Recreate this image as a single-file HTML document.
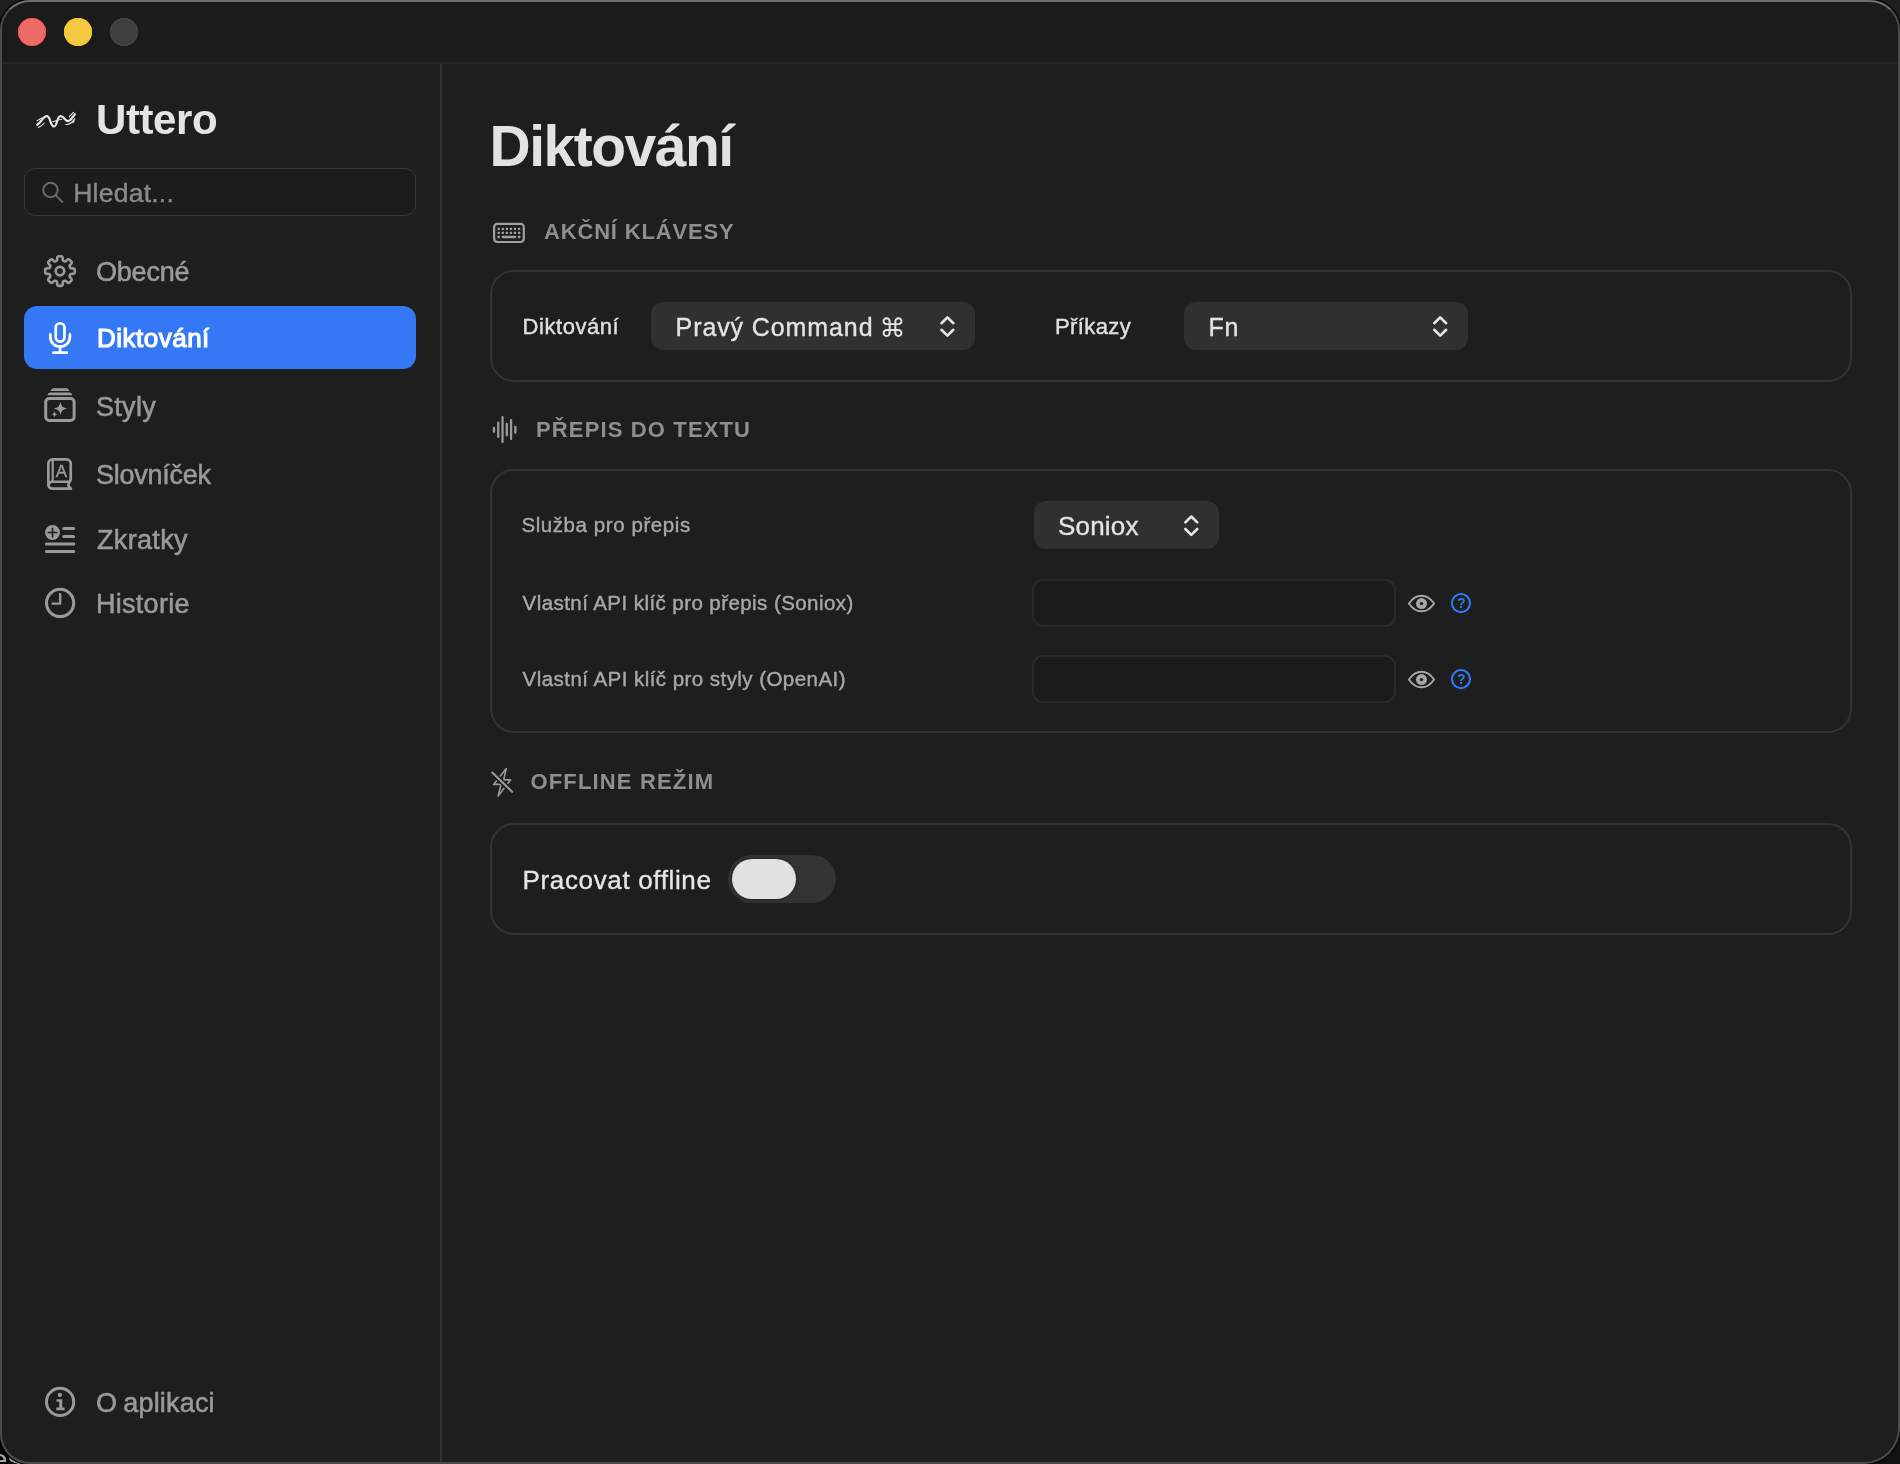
<!DOCTYPE html>
<html lang="cs">
<head>
<meta charset="utf-8">
<title>Uttero – Diktování</title>
<style>
*{box-sizing:border-box;margin:0;padding:0}
html,body{width:1900px;height:1464px;overflow:hidden;background:#1f1f1f}
body{font-family:"Liberation Sans",sans-serif;color:#e2e2e2;position:relative}
.abs{position:absolute}
.t{position:absolute;white-space:nowrap;line-height:1}
#win{will-change:transform;position:absolute;left:0;top:0;width:1900px;height:1464px;border-radius:30px 30px 36px 30px;background:#1e1e1e;overflow:hidden}
#titlebar{position:absolute;left:0;top:0;width:1900px;height:62px;background:#1b1b1b}
#titleline{position:absolute;left:0;top:62px;width:1900px;height:2px;background:#262626}
#sidebar{position:absolute;left:0;top:64px;width:440px;height:1400px;background:#1e1e1e}
#divider{position:absolute;left:440px;top:64px;width:2px;height:1400px;background:#303030}
#main{position:absolute;left:442px;top:64px;width:1458px;height:1400px;background:#1e1e1e}
#frame{position:absolute;left:0;top:0;width:1900px;height:1464px;border-radius:30px 30px 36px 30px;border:2px solid #4b4b4b;border-top-color:#6f6f6f;pointer-events:none;box-shadow:0 0 0 1.5px #050505}
.tl{position:absolute;top:18px;width:28px;height:28px;border-radius:50%}
.card{position:absolute;left:490px;width:1362px;border:2px solid #333;border-radius:24px;background:#1e1e1e}
.sel{position:absolute;height:48px;border-radius:12px;background:#303030}
.inp{position:absolute;left:1032px;width:364px;height:48px;border-radius:11px;background:#1b1b1b;border:2px solid #2a2a2a}
.nav{color:#9a9a9a;font-size:27px;-webkit-text-stroke:0.55px #9a9a9a}
.sec{color:#8f8f8f;font-size:22px;font-weight:bold}
.lbl{color:#a8a8a8;font-size:20.5px;-webkit-text-stroke:0.4px #a8a8a8}
svg{position:absolute;overflow:visible}
</style>
</head>
<body>
<div id="br" style="position:absolute;left:1860px;top:1424px;width:40px;height:40px;background:#121212"></div>
<div id="bl" style="position:absolute;left:0;top:1424px;width:40px;height:40px;background:#000;overflow:hidden;will-change:transform"><span class="t" style="left:-9px;top:21px;font-size:30px;color:#a4a4a4">es</span></div>
<div id="win">
  <div id="titlebar"></div>
  <div id="titleline"></div>
  <div id="sidebar"></div>
  <div id="main"></div>
  <div id="divider"></div>

  <!-- traffic lights -->
  <div class="tl" style="left:18px;background:#ee6a67;box-shadow:inset 0 0 0 1px #f04a44"></div>
  <div class="tl" style="left:64px;background:#f4c842;box-shadow:inset 0 0 0 1px #f9c426"></div>
  <div class="tl" style="left:110px;background:#3f3f3f;box-shadow:inset 0 0 0 1px #484848"></div>

  <!-- SIDEBAR -->
  <span class="t" id="brand" style="left:96.0px;top:99px;font-size:42px;font-weight:bold;color:#e4e4e4;letter-spacing:-0.40px">Uttero</span>
  <div class="abs" id="search" style="left:24px;top:168px;width:392px;height:48px;border-radius:11px;border:1px solid #3a3a3a;background:#1c1c1c"></div>
  <span class="t" id="searchph" style="left:73.2px;top:180px;font-size:26.5px;color:#8a8a8a;-webkit-text-stroke:0.4px #8a8a8a;letter-spacing:0.24px">Hledat...</span>

  <span class="t nav" id="n1" style="left:96.0px;top:259px;letter-spacing:-0.20px">Obecné</span>
  <div class="abs" id="selnav" style="left:24px;top:306px;width:392px;height:63px;border-radius:13px;background:#3478f6"></div>
  <span class="t nav" id="n2" style="left:97.0px;top:325px;font-size:26px;color:#fff;-webkit-text-stroke:1.15px #fff;letter-spacing:0.49px">Diktování</span>
  <span class="t nav" id="n3" style="left:96.0px;top:394px;letter-spacing:0.29px">Styly</span>
  <span class="t nav" id="n4" style="left:96.0px;top:462px;letter-spacing:-0.25px">Slovníček</span>
  <span class="t nav" id="n5" style="left:97.0px;top:527px;letter-spacing:0.33px">Zkratky</span>
  <span class="t nav" id="n6" style="left:96.0px;top:591px;letter-spacing:0.28px">Historie</span>
  <span class="t nav" id="n7" style="left:96.0px;top:1390px;letter-spacing:0.18px;word-spacing:-1.6px">O aplikaci</span>

  <!-- MAIN -->
  <span class="t" id="h1" style="left:489.6px;top:118px;font-size:57px;font-weight:bold;color:#e2e2e2;letter-spacing:-1.5px">Diktování</span>

  <span class="t sec" id="s1" style="left:544.0px;top:221px;letter-spacing:0.83px">AKČNÍ KLÁVESY</span>
  <div class="card" style="top:270px;height:112px"></div>
  <span class="t" id="l1" style="left:522.6px;top:316px;font-size:22px;color:#e0e0e0;-webkit-text-stroke:0.4px #e0e0e0;letter-spacing:0.55px">Diktování</span>
  <div class="sel" style="left:651px;top:302px;width:324px"></div>
  <span class="t" id="v1" style="left:675.6px;top:315px;font-size:25px;color:#e4e4e4;-webkit-text-stroke:0.35px #e4e4e4;letter-spacing:0.9px">Pravý Command</span>
  <span class="t" id="v1c" style="left:879.4px;top:315.4px;font-size:26px;color:#e4e4e4;font-family:'DejaVu Sans',sans-serif">⌘</span>
  <span class="t" id="l2" style="left:1055px;top:316px;font-size:22px;color:#e0e0e0;-webkit-text-stroke:0.4px #e0e0e0;letter-spacing:0.38px">Příkazy</span>
  <div class="sel" style="left:1184px;top:302px;width:284px"></div>
  <span class="t" id="v2" style="left:1208.6px;top:315px;font-size:25px;color:#e4e4e4;-webkit-text-stroke:0.35px #e4e4e4;letter-spacing:0.7px">Fn</span>

  <span class="t sec" id="s2" style="left:536.0px;top:419px;letter-spacing:1.14px">PŘEPIS DO TEXTU</span>
  <div class="card" style="top:469px;height:264px"></div>
  <span class="t lbl" id="l3" style="left:521.4px;top:515px;letter-spacing:0.58px">Služba pro přepis</span>
  <div class="sel" style="left:1034px;top:501px;width:185px"></div>
  <span class="t" id="v3" style="left:1058.0px;top:513px;font-size:26px;color:#e4e4e4;-webkit-text-stroke:0.35px #e4e4e4;letter-spacing:0.20px">Soniox</span>
  <span class="t lbl" id="l4" style="left:522.6px;top:593px;letter-spacing:0.43px">Vlastní API klíč pro přepis (Soniox)</span>
  <div class="inp" style="top:579px"></div>
  <span class="t lbl" id="l5" style="left:522.6px;top:669px;letter-spacing:0.45px">Vlastní API klíč pro styly (OpenAI)</span>
  <div class="inp" style="top:655px"></div>

  <span class="t sec" id="s3" style="left:530.4px;top:771px;letter-spacing:1.17px">OFFLINE REŽIM</span>
  <div class="card" style="top:823px;height:112px"></div>
  <span class="t" id="l6" style="left:522.6px;top:867px;font-size:26px;color:#e6e6e6;-webkit-text-stroke:0.35px #e6e6e6;letter-spacing:0.64px">Pracovat offline</span>
  <div class="abs" id="tog" style="left:728px;top:855px;width:108px;height:48px;border-radius:24px;background:#333"></div>
  <div class="abs" id="knob" style="left:732px;top:859px;width:64px;height:40px;border-radius:20px;background:#e1e1e1;box-shadow:0 0 4px rgba(0,0,0,.35)"></div>
  <!--ICONS--><svg id="icons" width="1900" height="1464" viewBox="0 0 1900 1464" style="left:0;top:0">
<g fill="none" stroke="#e6e6e6" stroke-linecap="round" stroke-linejoin="round">
<path stroke-width="2.2" d="M37.2,124.7 C41,123 43.0,116.2 46.75,116.2 C50.8,116.2 50.0,126.45 53.9,126.45 C57.6,126.45 56.6,116.2 60.6,116.2 C64.2,116.2 64.8,121.1 68,121.1 C71,121.1 72.6,116.6 74.9,114.2"/>
<path stroke-width="1.1" stroke-dasharray="1.6 0.9" d="M37.0,120.9 L41.6,118.0"/>
<path stroke-width="1.1" stroke-dasharray="2.2 0.8" d="M38.2,127.2 C40.2,126.8 42.4,125.2 44.1,123"/>
<path stroke-width="1.2" d="M52.9,121.8 C55,121.6 56.6,119.4 61.6,119.5"/>
<path stroke-width="1.2" d="M65.8,124.5 C69.4,124.8 72.4,122.2 74.7,118.8"/>
<path stroke-width="1.2" stroke-dasharray="1.6 0.9" d="M69.3,116.6 L73.4,112.4"/>
<path stroke-width="1.2" d="M72.9,122.6 L74.3,121.2"/>
</g>
<g fill="none" stroke="#6a6a6a" stroke-width="2" stroke-linecap="round"><circle cx="50.5" cy="190" r="7.2"/><path d="M55.8,195.4 L62.2,201.8"/></g>
<path d="M74.75,271.10 L74.75,271.36 L74.74,271.62 L74.73,271.87 L74.71,272.13 L74.68,272.39 L74.64,272.64 L74.58,272.90 L74.49,273.14 L74.33,273.38 L74.04,273.58 L73.55,273.74 L72.84,273.84 L72.03,273.89 L71.33,273.94 L70.85,274.02 L70.55,274.14 L70.36,274.28 L70.23,274.44 L70.14,274.61 L70.05,274.78 L69.98,274.95 L69.90,275.12 L69.83,275.29 L69.76,275.47 L69.69,275.64 L69.63,275.82 L69.58,276.01 L69.56,276.21 L69.59,276.44 L69.72,276.74 L70.00,277.14 L70.46,277.67 L71.00,278.28 L71.44,278.85 L71.67,279.31 L71.73,279.66 L71.67,279.94 L71.57,280.18 L71.43,280.40 L71.28,280.60 L71.11,280.80 L70.95,281.00 L70.77,281.19 L70.60,281.38 L70.42,281.57 L70.23,281.75 L70.04,281.92 L69.85,282.10 L69.65,282.26 L69.45,282.43 L69.25,282.58 L69.03,282.72 L68.79,282.82 L68.51,282.88 L68.16,282.82 L67.70,282.59 L67.13,282.15 L66.52,281.61 L65.99,281.15 L65.59,280.87 L65.29,280.74 L65.06,280.71 L64.86,280.73 L64.67,280.78 L64.49,280.84 L64.32,280.91 L64.14,280.98 L63.97,281.05 L63.80,281.13 L63.63,281.20 L63.46,281.29 L63.29,281.38 L63.13,281.51 L62.99,281.70 L62.87,282.00 L62.79,282.48 L62.74,283.18 L62.69,283.99 L62.59,284.70 L62.43,285.19 L62.23,285.48 L61.99,285.64 L61.75,285.73 L61.49,285.79 L61.24,285.83 L60.98,285.86 L60.72,285.88 L60.47,285.89 L60.21,285.90 L59.95,285.90 L59.69,285.90 L59.43,285.89 L59.18,285.88 L58.92,285.86 L58.66,285.83 L58.41,285.79 L58.15,285.73 L57.91,285.64 L57.67,285.48 L57.47,285.19 L57.31,284.70 L57.21,283.99 L57.16,283.18 L57.11,282.48 L57.03,282.00 L56.91,281.70 L56.77,281.51 L56.61,281.38 L56.44,281.29 L56.27,281.20 L56.10,281.13 L55.93,281.05 L55.76,280.98 L55.58,280.91 L55.41,280.84 L55.23,280.78 L55.04,280.73 L54.84,280.71 L54.61,280.74 L54.31,280.87 L53.91,281.15 L53.38,281.61 L52.77,282.15 L52.20,282.59 L51.74,282.82 L51.39,282.88 L51.11,282.82 L50.87,282.72 L50.65,282.58 L50.45,282.43 L50.25,282.26 L50.05,282.10 L49.86,281.92 L49.67,281.75 L49.48,281.57 L49.30,281.38 L49.13,281.19 L48.95,281.00 L48.79,280.80 L48.62,280.60 L48.47,280.40 L48.33,280.18 L48.23,279.94 L48.17,279.66 L48.23,279.31 L48.46,278.85 L48.90,278.28 L49.44,277.67 L49.90,277.14 L50.18,276.74 L50.31,276.44 L50.34,276.21 L50.32,276.01 L50.27,275.82 L50.21,275.64 L50.14,275.47 L50.07,275.29 L50.00,275.12 L49.92,274.95 L49.85,274.78 L49.76,274.61 L49.67,274.44 L49.54,274.28 L49.35,274.14 L49.05,274.02 L48.57,273.94 L47.87,273.89 L47.06,273.84 L46.35,273.74 L45.86,273.58 L45.57,273.38 L45.41,273.14 L45.32,272.90 L45.26,272.64 L45.22,272.39 L45.19,272.13 L45.17,271.87 L45.16,271.62 L45.15,271.36 L45.15,271.10 L45.15,270.84 L45.16,270.58 L45.17,270.33 L45.19,270.07 L45.22,269.81 L45.26,269.56 L45.32,269.30 L45.41,269.06 L45.57,268.82 L45.86,268.62 L46.35,268.46 L47.06,268.36 L47.87,268.31 L48.57,268.26 L49.05,268.18 L49.35,268.06 L49.54,267.92 L49.67,267.76 L49.76,267.59 L49.85,267.42 L49.92,267.25 L50.00,267.08 L50.07,266.91 L50.14,266.73 L50.21,266.56 L50.27,266.38 L50.32,266.19 L50.34,265.99 L50.31,265.76 L50.18,265.46 L49.90,265.06 L49.44,264.53 L48.90,263.92 L48.46,263.35 L48.23,262.89 L48.17,262.54 L48.23,262.26 L48.33,262.02 L48.47,261.80 L48.62,261.60 L48.79,261.40 L48.95,261.20 L49.13,261.01 L49.30,260.82 L49.48,260.63 L49.67,260.45 L49.86,260.28 L50.05,260.10 L50.25,259.94 L50.45,259.77 L50.65,259.62 L50.87,259.48 L51.11,259.38 L51.39,259.32 L51.74,259.38 L52.20,259.61 L52.77,260.05 L53.38,260.59 L53.91,261.05 L54.31,261.33 L54.61,261.46 L54.84,261.49 L55.04,261.47 L55.23,261.42 L55.41,261.36 L55.58,261.29 L55.76,261.22 L55.93,261.15 L56.10,261.07 L56.27,261.00 L56.44,260.91 L56.61,260.82 L56.77,260.69 L56.91,260.50 L57.03,260.20 L57.11,259.72 L57.16,259.02 L57.21,258.21 L57.31,257.50 L57.47,257.01 L57.67,256.72 L57.91,256.56 L58.15,256.47 L58.41,256.41 L58.66,256.37 L58.92,256.34 L59.18,256.32 L59.43,256.31 L59.69,256.30 L59.95,256.30 L60.21,256.30 L60.47,256.31 L60.72,256.32 L60.98,256.34 L61.24,256.37 L61.49,256.41 L61.75,256.47 L61.99,256.56 L62.23,256.72 L62.43,257.01 L62.59,257.50 L62.69,258.21 L62.74,259.02 L62.79,259.72 L62.87,260.20 L62.99,260.50 L63.13,260.69 L63.29,260.82 L63.46,260.91 L63.63,261.00 L63.80,261.07 L63.97,261.15 L64.14,261.22 L64.32,261.29 L64.49,261.36 L64.67,261.42 L64.86,261.47 L65.06,261.49 L65.29,261.46 L65.59,261.33 L65.99,261.05 L66.52,260.59 L67.13,260.05 L67.70,259.61 L68.16,259.38 L68.51,259.32 L68.79,259.38 L69.03,259.48 L69.25,259.62 L69.45,259.77 L69.65,259.94 L69.85,260.10 L70.04,260.28 L70.23,260.45 L70.42,260.63 L70.60,260.82 L70.77,261.01 L70.95,261.20 L71.11,261.40 L71.28,261.60 L71.43,261.80 L71.57,262.02 L71.67,262.26 L71.73,262.54 L71.67,262.89 L71.44,263.35 L71.00,263.92 L70.46,264.53 L70.00,265.06 L69.72,265.46 L69.59,265.76 L69.56,265.99 L69.58,266.19 L69.63,266.38 L69.69,266.56 L69.76,266.73 L69.83,266.91 L69.90,267.08 L69.98,267.25 L70.05,267.42 L70.14,267.59 L70.23,267.76 L70.36,267.92 L70.55,268.06 L70.85,268.18 L71.33,268.26 L72.03,268.31 L72.84,268.36 L73.55,268.46 L74.04,268.62 L74.33,268.82 L74.49,269.06 L74.58,269.30 L74.64,269.56 L74.68,269.81 L74.71,270.07 L74.73,270.33 L74.74,270.58 L74.75,270.84Z" fill="none" stroke="#9a9a9a" stroke-width="2.6" stroke-linejoin="round"/>
<circle cx="59.95" cy="271.1" r="4.25" fill="none" stroke="#9a9a9a" stroke-width="2.7"/>
<g fill="none" stroke="#fff" stroke-width="2.7" stroke-linecap="round">
<rect x="55.75" y="323.25" width="8.7" height="18.3" rx="4.35"/>
<path d="M50.3,334.4 V336.9 A9.8,9.8 0 0 0 69.9,336.9 V334.4"/>
<path d="M60.1,346.7 V352.5 M53.4,352.55 H66.8"/>
</g>
<g fill="#9a9a9a" stroke="none">
<rect x="45.7" y="398.4" width="28.4" height="22.2" rx="3.6" fill="none" stroke="#9a9a9a" stroke-width="3"/>
<path d="M47.6,395.2 C47.6,393.4 48.8,392.4 50.4,392.4 H69.3 C70.9,392.4 72.1,393.4 72.1,395.2 Z"/>
<path d="M50.8,391 C50.8,389.2 52,388.2 53.6,388.2 H66.3 C67.9,388.2 69.1,389.2 69.1,391 Z"/>
<path d="M60.4,401.8 Q61.08,407.92 67.2,408.6 Q61.08,409.28000000000003 60.4,415.40000000000003 Q59.72,409.28000000000003 53.6,408.6 Q59.72,407.92 60.4,401.8Z"/>
<path d="M54.5,410.90000000000003 Q54.84,413.96000000000004 57.9,414.3 Q54.84,414.64 54.5,417.7 Q54.16,414.64 51.1,414.3 Q54.16,413.96000000000004 54.5,410.90000000000003Z"/>
</g>
<g fill="none" stroke="#9a9a9a" stroke-width="2.7" stroke-linejoin="round" stroke-linecap="round">
<path d="M52.6,459.35 H66.5 A4.25,4.25 0 0 1 70.75,463.6 V478.4 C70.75,481.6 68.3,482.3 68.3,485 C68.3,486.6 69.6,487.6 70.9,488.65 H52.4 A4.05,4.05 0 0 1 48.35,484.6 V463.6 A4.25,4.25 0 0 1 52.6,459.35 Z"/>
<path d="M69.4,481.7 H52.4 A3.5,3.5 0 0 0 48.6,485.1" stroke-width="2.6"/>
<path d="M52.7,460 V481.2" stroke-width="2.2"/>
</g>
<circle cx="52.5" cy="532.5" r="7.5" fill="#9a9a9a"/>
<path d="M48.3,532.5 H56.7 M52.5,528.3 V536.7" stroke="#1e1e1e" stroke-width="1.7" stroke-linecap="round" fill="none"/>
<path d="M63.7,528.5 H73.6 M63.7,536.4 H73.6 M46.4,544 H73.8 M46.4,551.5 H73.8" stroke="#9a9a9a" stroke-width="3" stroke-linecap="round" fill="none"/>
<circle cx="60.1" cy="602.95" r="13.6" fill="none" stroke="#9a9a9a" stroke-width="3"/>
<path d="M60.15,594.1 V603.6 H52.6" fill="none" stroke="#9a9a9a" stroke-width="2.4" stroke-linecap="round" stroke-linejoin="miter"/>
<circle cx="60.1" cy="1401.9" r="13.6" fill="none" stroke="#9a9a9a" stroke-width="3"/>
<circle cx="59.9" cy="1394.9" r="2.1" fill="#9a9a9a"/>
<path d="M56.6,1399.2 H62.3 V1407.6 H64.6 V1410.2 H56.3 V1407.6 H59.2 V1401.8 H56.6 Z" fill="#9a9a9a"/>
<rect x="494.1" y="223.9" width="29.7" height="18.1" rx="3.2" fill="none" stroke="#a0a0a0" stroke-width="2.2"/>
<rect x="497.55" y="227.75" width="2.3" height="2.3" rx="0.3" fill="#a0a0a0"/>
<rect x="501.65" y="227.75" width="2.3" height="2.3" rx="0.3" fill="#a0a0a0"/>
<rect x="505.75" y="227.75" width="2.3" height="2.3" rx="0.3" fill="#a0a0a0"/>
<rect x="509.85" y="227.75" width="2.3" height="2.3" rx="0.3" fill="#a0a0a0"/>
<rect x="513.85" y="227.75" width="2.3" height="2.3" rx="0.3" fill="#a0a0a0"/>
<rect x="517.95" y="227.75" width="2.3" height="2.3" rx="0.3" fill="#a0a0a0"/>
<rect x="497.55" y="231.75" width="2.3" height="2.3" rx="0.3" fill="#a0a0a0"/>
<rect x="501.65" y="231.75" width="2.3" height="2.3" rx="0.3" fill="#a0a0a0"/>
<rect x="505.75" y="231.75" width="2.3" height="2.3" rx="0.3" fill="#a0a0a0"/>
<rect x="509.85" y="231.75" width="2.3" height="2.3" rx="0.3" fill="#a0a0a0"/>
<rect x="513.85" y="231.75" width="2.3" height="2.3" rx="0.3" fill="#a0a0a0"/>
<rect x="517.95" y="231.75" width="2.3" height="2.3" rx="0.3" fill="#a0a0a0"/>
<rect x="497.55" y="235.85" width="2.3" height="2.3" rx="0.3" fill="#a0a0a0"/>
<rect x="517.95" y="235.85" width="2.3" height="2.3" rx="0.3" fill="#a0a0a0"/>
<rect x="501.85" y="235.85" width="14.2" height="2.3" rx="0.4" fill="#a0a0a0"/>
<path d="M493.98,427.85 V431.85 M498.24,422.65 V436.95 M502.53,417.25 V442.05 M506.82,423.95 V435.25 M511.08,420.15 V439.05 M515.37,426.85 V432.85" stroke="#9a9a9a" stroke-width="2.3" stroke-linecap="round" fill="none"/>
<path d="M506.3,768.6 L493.6,784.4 H501.1 L498.1,796 L510.5,779.9 H503.6 Z" fill="none" stroke="#9a9a9a" stroke-width="1.6" stroke-linejoin="round"/>
<path d="M492.1,772.4 L512.3,792" stroke="#1e1e1e" stroke-width="5.2" stroke-linecap="butt" fill="none"/>
<path d="M492.3,772.6 L512.1,791.8" stroke="#9a9a9a" stroke-width="2.1" stroke-linecap="round" fill="none"/>
<path d="M941.45,323.20 L947.4,317.35 L953.35,323.20 M941.45,329.80 L947.4,335.65 L953.35,329.80" fill="none" stroke="#e6e6e6" stroke-width="2.6" stroke-linecap="round" stroke-linejoin="round"/>
<path d="M1434.25,323.20 L1440.2,317.35 L1446.15,323.20 M1434.25,329.80 L1440.2,335.65 L1446.15,329.80" fill="none" stroke="#e6e6e6" stroke-width="2.6" stroke-linecap="round" stroke-linejoin="round"/>
<path d="M1185.35,522.40 L1191.3,516.55 L1197.25,522.40 M1185.35,529.00 L1191.3,534.85 L1197.25,529.00" fill="none" stroke="#e6e6e6" stroke-width="2.6" stroke-linecap="round" stroke-linejoin="round"/>
<path d="M1408.9,603.5 C1412.3,598.5 1416.3,595.7 1421.5,595.7 C1426.7,595.7 1430.7,598.5 1434.1,603.5 C1430.7,608.5 1426.7,611.3 1421.5,611.3 C1416.3,611.3 1412.3,608.5 1408.9,603.5Z" fill="none" stroke="#a6a6a6" stroke-width="1.9" stroke-linejoin="round"/><circle cx="1421.5" cy="603.6" r="5.5" fill="#a6a6a6"/><circle cx="1421.5" cy="603.6" r="1.7" fill="#1e1e1e"/>
<circle cx="1460.95" cy="603.05" r="9.05" fill="none" stroke="#3079f6" stroke-width="2.1"/>
<path d="M1408.9,679.5 C1412.3,674.5 1416.3,671.7 1421.5,671.7 C1426.7,671.7 1430.7,674.5 1434.1,679.5 C1430.7,684.5 1426.7,687.3 1421.5,687.3 C1416.3,687.3 1412.3,684.5 1408.9,679.5Z" fill="none" stroke="#a6a6a6" stroke-width="1.9" stroke-linejoin="round"/><circle cx="1421.5" cy="679.6" r="5.5" fill="#a6a6a6"/><circle cx="1421.5" cy="679.6" r="1.7" fill="#1e1e1e"/>
<circle cx="1460.95" cy="679.05" r="9.05" fill="none" stroke="#3079f6" stroke-width="2.1"/>
</svg><!--/ICONS-->
  <span class="t" id="bookA" style="left:55.7px;top:463.4px;font-size:17px;color:#9a9a9a;-webkit-text-stroke:0.4px #9a9a9a">A</span>
  <span class="t" id="q1" style="left:1457.1px;top:595.9px;font-size:14px;font-weight:bold;color:#3079f6">?</span>
  <span class="t" id="q2" style="left:1457.1px;top:671.9px;font-size:14px;font-weight:bold;color:#3079f6">?</span>
</div>
<div id="frame"></div>
</body>
</html>
